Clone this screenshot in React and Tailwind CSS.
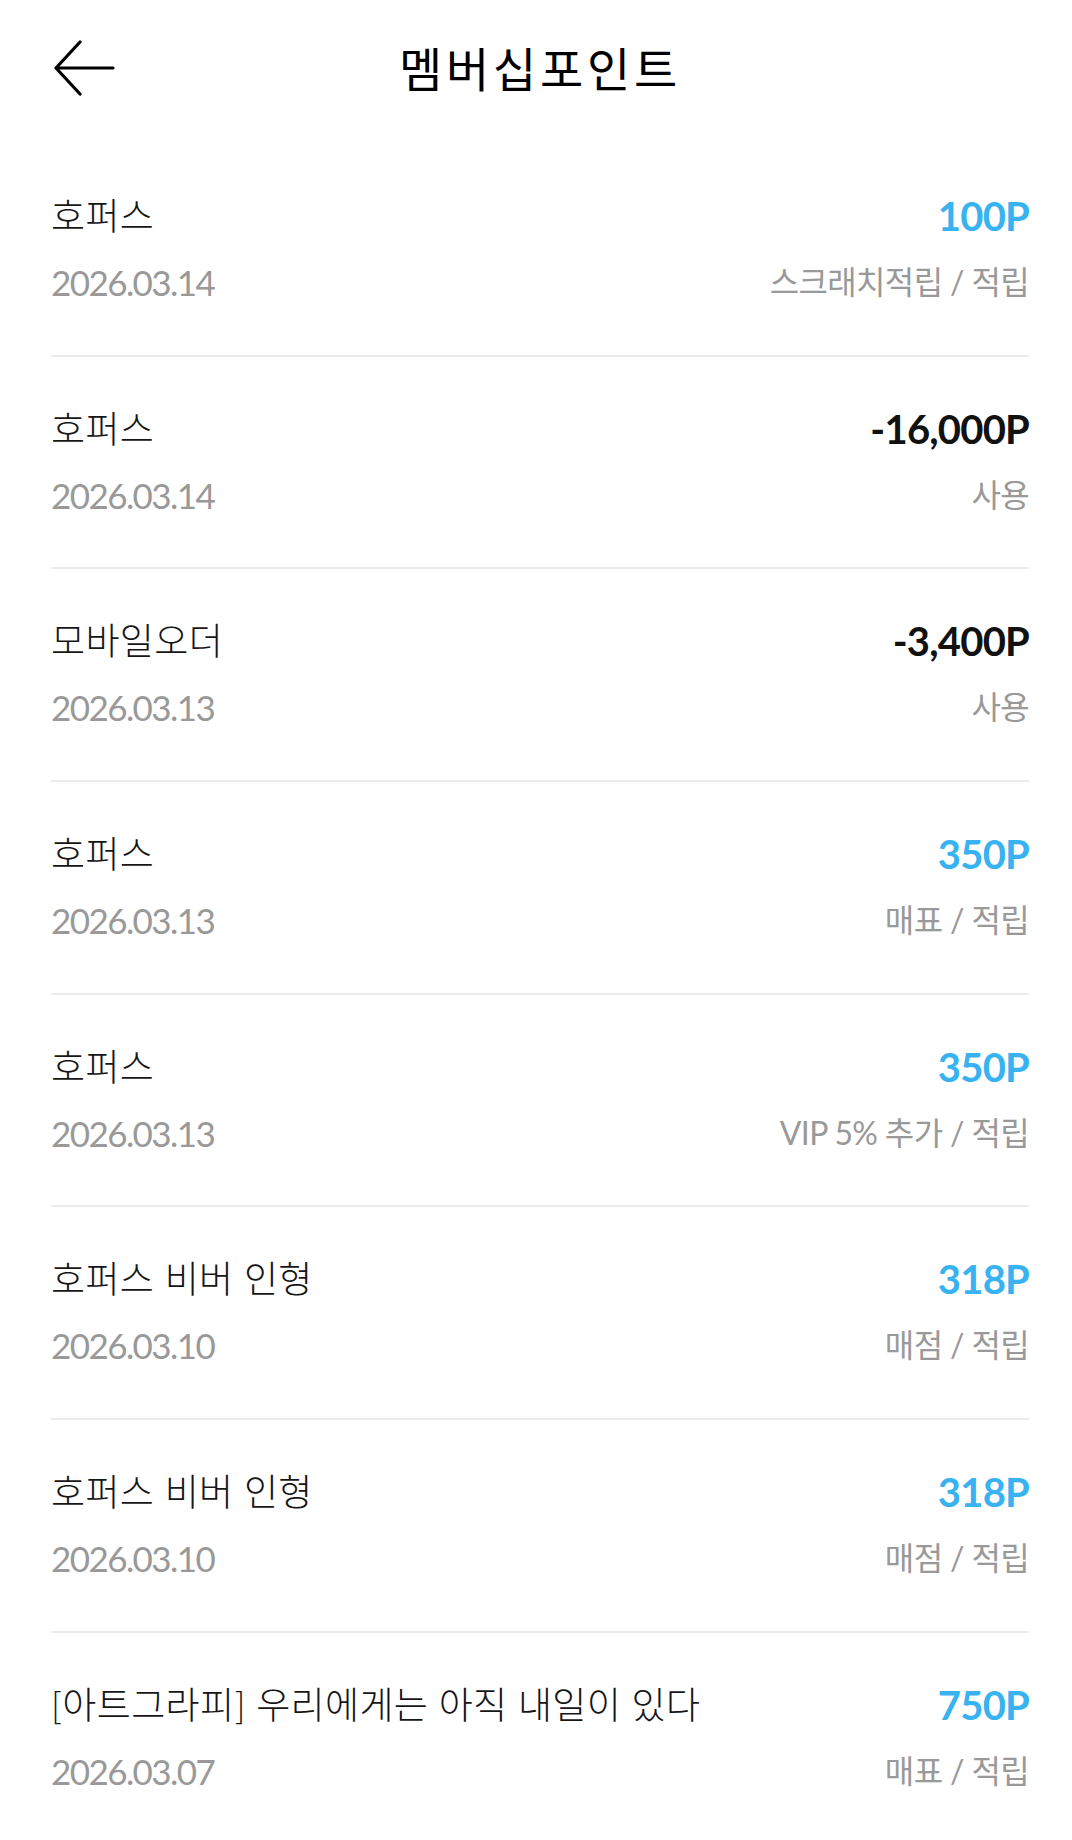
const rows = [
  { title: "호퍼스", date: "2026.03.14", amount: "100P", label: "스크래치적립 / 적립", plus: true },
  { title: "호퍼스", date: "2026.03.14", amount: "-16,000P", label: "사용", plus: false },
  { title: "모바일오더", date: "2026.03.13", amount: "-3,400P", label: "사용", plus: false },
  { title: "호퍼스", date: "2026.03.13", amount: "350P", label: "매표 / 적립", plus: true },
  { title: "호퍼스", date: "2026.03.13", amount: "350P", label: "VIP 5% 추가 / 적립", plus: true },
  { title: "호퍼스 비버 인형", date: "2026.03.10", amount: "318P", label: "매점 / 적립", plus: true },
  { title: "호퍼스 비버 인형", date: "2026.03.10", amount: "318P", label: "매점 / 적립", plus: true },
  { title: "[아트그라피] 우리에게는 아직 내일이 있다", date: "2026.03.07", amount: "750P", label: "매표 / 적립", plus: true },
];

export default function App() {
  return (
    <div className="w-[1072px] min-h-[1840px] bg-white font-['Lato','Noto_Sans_CJK_KR',sans-serif]">
      {/* Header */}
      <div className="relative h-[144px] flex items-center justify-center">
        <button className="absolute left-[53px] top-[40px] w-[62px] h-[56px] flex items-center justify-center">
          <svg width="62" height="56" viewBox="0 0 62 56" fill="none">
            <path
              d="M60 28H3M27 2L3 28L27 54"
              stroke="#000"
              strokeWidth="3.2"
              strokeLinecap="round"
              strokeLinejoin="round"
            />
          </svg>
        </button>
        <h1 className="-mt-[12px] pl-[8px] text-[47px] leading-none font-normal text-black tracking-[0.08em] font-['Noto_Sans_CJK_KR',sans-serif]">
          멤버십포인트
        </h1>
      </div>

      {/* List */}
      <div className="pl-[51px] pr-[43px]">
        {rows.map((r, i) => (
          <div
            key={i}
            className="h-[212.7px] border-b-2 border-[#ebebeb] pt-[50px] flex justify-between"
          >
            <div className="flex flex-col">
              <span className="h-[44px] leading-[44px] text-[37px] text-[#161616] tracking-[0.01em] font-light">
                {r.title}
              </span>
              <span className="mt-[24px] h-[40px] leading-[40px] text-[35px] text-[#999] tracking-[-0.045em]">
                {r.date}
              </span>
            </div>
            <div className="flex flex-col items-end">
              <span
                className={`h-[44px] leading-[44px] text-[40px] font-bold tracking-[-0.02em] ${
                  r.plus ? "text-[#38b2f0]" : "text-[#111]"
                }`}
              >
                {r.amount}
              </span>
              <span className="mt-[24px] h-[40px] leading-[40px] text-[32px] text-[#999] tracking-[-0.02em]">
                {r.label}
              </span>
            </div>
          </div>
        ))}
      </div>
    </div>
  );
}
